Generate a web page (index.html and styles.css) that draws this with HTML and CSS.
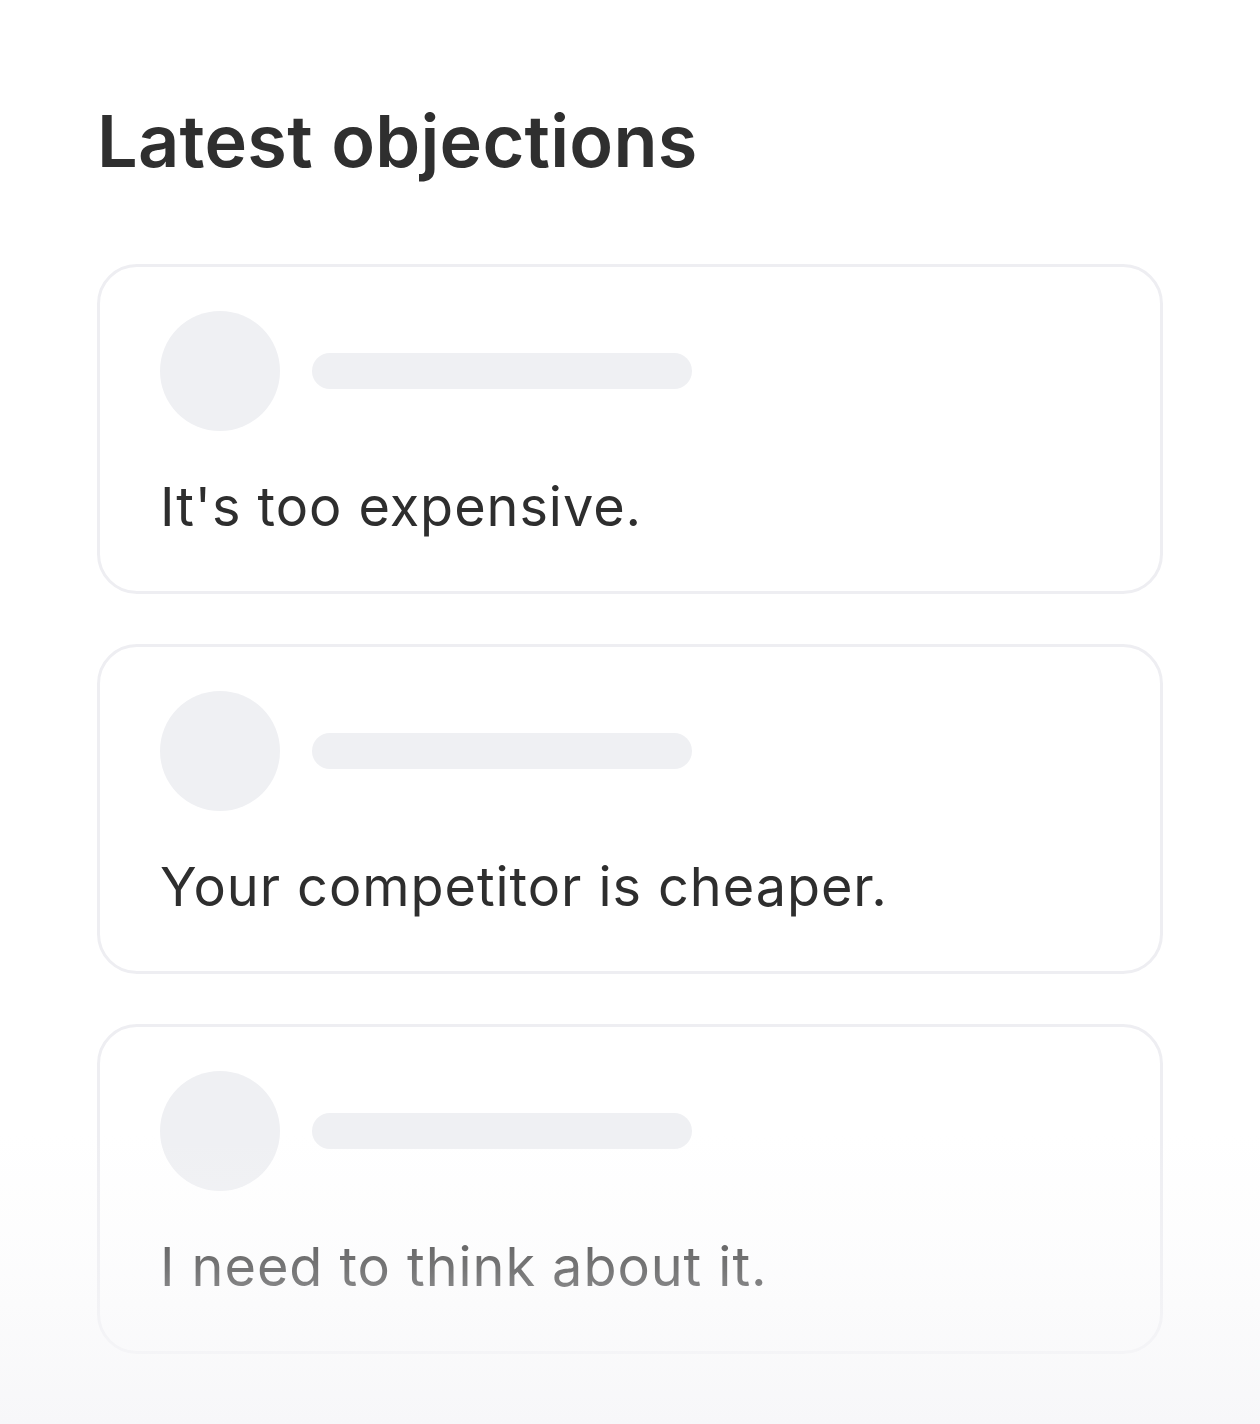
FILE: index.html
```html
<!DOCTYPE html>
<html lang="en">
<head>
<meta charset="utf-8">
<title>Latest objections</title>
<link rel="stylesheet" href="styles.css">
</head>
<body>
<main class="page">
  <h1 class="title">Latest objections</h1>
  <ul class="list">
    <li class="card">
      <div class="card-head"><span class="avatar"></span><span class="bar"></span></div>
      <p class="quote">It's too expensive.</p>
    </li>
    <li class="card">
      <div class="card-head"><span class="avatar"></span><span class="bar"></span></div>
      <p class="quote">Your competitor is cheaper.</p>
    </li>
    <li class="card">
      <div class="card-head"><span class="avatar"></span><span class="bar"></span></div>
      <p class="quote">I need to think about it.</p>
    </li>
  </ul>
  <div class="fade"></div>
</main>
</body>
</html>
```
FILE: styles.css
```css
html, body {
  margin: 0;
  padding: 0;
  background: #ffffff;
}
body {
  font-family: Inter, "Noto Sans", sans-serif;
  color: #2e2e2e;
}
.page {
  position: relative;
  width: 1260px;
  height: 1424px;
  box-sizing: border-box;
  padding: 97px 97px 0;
  overflow: hidden;
}
.title {
  margin: 0;
  font-size: 72px;
  line-height: 87px;
  font-weight: 600;
  color: #2f2f2f;
  letter-spacing: 0.25px;
}
.list {
  list-style: none;
  margin: 80px 0 0;
  padding: 0;
  display: flex;
  flex-direction: column;
  gap: 50px;
}
.card {
  border: 3px solid #eeeef2;
  border-radius: 40px;
  padding: 44px 60px;
  display: flex;
  flex-direction: column;
  gap: 36px;
}
.card-head {
  display: flex;
  align-items: center;
  gap: 32px;
}
.avatar {
  width: 120px;
  height: 120px;
  border-radius: 50%;
  background: #eff0f3;
}
.bar {
  width: 380px;
  height: 36px;
  border-radius: 18px;
  background: #eff0f3;
}
.quote {
  margin: 0;
  font-size: 54px;
  line-height: 80px;
  font-weight: 400;
  color: #2e2e2e;
  letter-spacing: 0.95px;
}
.fade {
  position: absolute;
  left: 0;
  right: 0;
  bottom: 0;
  height: 290px;
  background: linear-gradient(to bottom, rgba(247, 247, 249, 0), rgba(247, 247, 249, 0.36) 47%, rgba(247, 247, 249, 1));
  pointer-events: none;
}
```
